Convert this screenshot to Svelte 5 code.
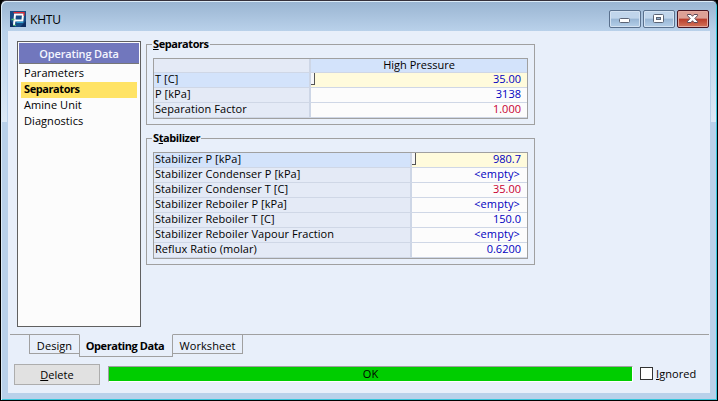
<script>
  const pages = ['Parameters', 'Separators', 'Amine Unit', 'Diagnostics'];
  const separators = [
    { name: 'T [C]', value: '35.00' },
    { name: 'P [kPa]', value: '3138' },
    { name: 'Separation Factor', value: '1.000', red: true }
  ];
  const stabilizer = [
    { name: 'Stabilizer P [kPa]', value: '980.7' },
    { name: 'Stabilizer Condenser P [kPa]', value: '<empty>' },
    { name: 'Stabilizer Condenser T [C]', value: '35.00', red: true },
    { name: 'Stabilizer Reboiler P [kPa]', value: '<empty>' },
    { name: 'Stabilizer Reboiler T [C]', value: '150.0' },
    { name: 'Stabilizer Reboiler Vapour Fraction', value: '<empty>' },
    { name: 'Reflux Ratio (molar)', value: '0.6200' }
  ];
</script>

{#snippet rows(items)}
  {#each items as row, i}
    <div class="row" class:current={i === 0}>
      <div class="name">{row.name}</div>
      <div class="value" class:red={row.red} class:empty={row.value === '<empty>'}>
        {#if i === 0}<i class="grip"></i>{/if}<span>{row.value}</span>
      </div>
    </div>
  {/each}
{/snippet}

<div class="window">
  <header>
    <svg class="logo" width="16" height="16" viewBox="0 0 16 16">
      <rect width="16" height="16" fill="#174c85" />
      <path d="M0 16V9l5 7zM10 16l6-6v6z" fill="#0d2d61" />
      <path d="M4 14L5 3.5h8L12.4 9.5H5" fill="none" stroke="#fff" stroke-width="2" />
      <path d="M1.5 8.5h3" stroke="#59c878" stroke-width="1.5" />
      <path d="M3.5 1.7h10.5v3" fill="none" stroke="#e02b35" stroke-width="1.3" />
      <path d="M6.5 11.3h6.8" stroke="#35b5e2" stroke-width="1" />
      <path d="M3 14.3h3" stroke="#59c878" stroke-width="1" />
    </svg>
    <span class="title">KHTU</span>
    <div class="controls">
      <div class="ctl"><svg width="30" height="16"><rect x="9.5" y="7.5" width="10" height="4" rx="1" fill="#fff" stroke="#5b6475" /></svg></div>
      <div class="ctl"><svg width="30" height="16"><rect x="9.5" y="3.5" width="10" height="8" rx="1" fill="#fff" stroke="#5b6475" /><rect x="12.5" y="6.5" width="4" height="2" fill="#8facc9" stroke="#5b6475" /></svg></div>
      <div class="ctl close"><svg width="30" height="16"><path d="M9.5 3.5h3.5l1.5 1.8 1.5-1.8h3.5v1.2l-2.7 2.8 2.7 2.8v1.2H16l-1.5-1.8-1.5 1.8H9.5v-1.2l2.7-2.8-2.7-2.8z" fill="#fff" stroke="#5b4857" /></svg></div>
    </div>
  </header>

  <main>
    <div class="body">
      <nav>
        <div class="heading"><span>Operating Data</span></div>
        {#each pages as page}
          <div class="page" class:selected={page === 'Separators'}><span>{page}</span></div>
        {/each}
      </nav>
      <div class="groups">
        <section class="first">
          <h2><u>S</u>eparators</h2>
          <div class="table">
            <div class="row head"><div class="name"></div><div class="colhead"><span>High Pressure</span></div></div>
            {@render rows(separators)}
          </div>
        </section>
        <section class="second">
          <h2>S<u>t</u>abilizer</h2>
          <div class="table">{@render rows(stabilizer)}</div>
        </section>
      </div>
    </div>

    <div class="tabs">
      <div class="lead"></div>
      <div class="tab design"><span>Design</span></div>
      <div class="tab active"><span>Operating Data</span></div>
      <div class="tab worksheet"><span>Worksheet</span></div>
      <div class="rest"></div>
    </div>

    <footer>
      <div class="delete"><span><u>D</u>elete</span></div>
      <div class="status"><span>OK</span></div>
      <div class="check"></div>
      <div class="ignored"><u>I</u>gnored</div>
    </footer>
  </main>
</div>

<style>
  :global(body) { background: #000; overflow: hidden; }
  * { box-sizing: border-box; }
  .window {
    width: 718px; height: 401px; padding: 0 6px 6px;
    border: 1px solid #000; border-top-color: #35303a; border-radius: 6px 6px 0 0;
    background:
      linear-gradient(#b9d1ea, #dce9f6) 1px 30px / 5px 91px no-repeat,
      linear-gradient(#b9d1ea, #dce9f6) 710px 30px / 5px 91px no-repeat,
      linear-gradient(#99b4d1, #b9d1ea 30px);
    box-shadow: inset 1px 1px #dcebf7, inset -1px -1px #38c6dc;
    font: 11px/15px "Open Sans", "Noto Sans", sans-serif; letter-spacing: 0.06px; color: #000;
    white-space: nowrap;
  }
  header { height: 30px; display: flex; align-items: flex-start; padding: 0 2px 0 3px; }
  .logo { margin-top: 10px; }
  .title { margin: 11px 0 0 4px; font-size: 12px; letter-spacing: -0.2px; }
  .controls { margin: 9px 0 0 auto; display: flex; gap: 2px; }
  .ctl {
    width: 32px; height: 18px; border: 1px solid #59708d; border-radius: 2px;
    background: linear-gradient(#c0d5eb 0 45%, #98b6d5 50%, #b5cfe8);
    box-shadow: inset 0 0 0 1px #d3e2f2;
  }
  .ctl svg { display: block; }
  .close { border-color: #481522; background: linear-gradient(#dda096 0 45%, #b93c2b 50%, #d3745a); box-shadow: inset 0 0 0 1px #e5aaa0; }
  main { height: 362px; width: 702px; margin-left: 1px; background: #e8effa; display: flex; flex-direction: column; }
  .body { height: 303px; display: flex; padding: 10px 0 0 9px; }
  nav { width: 124px; height: 286px; border: 1px solid #606060; background: #fcfcfc; padding: 1px; }
  .heading { height: 21px; margin-bottom: 2px; background: #7177bd; border-bottom: 1px solid #777; color: #f4f5ff; font-weight: 600; text-align: center; line-height: 21px; letter-spacing: -0.15px; }
  .page { height: 16px; margin: 0 2px; padding-left: 3px; line-height: 14px; }
  .selected { background: #ffe365; font-weight: 700; letter-spacing: -0.42px; }
  .groups { margin-left: 5px; width: 389px; padding-top: 3px; }
  section { border: 1px solid #a0a0a0; padding: 0 6px; }
  .first { height: 81px; }
  .second { height: 127px; margin-top: 13px; }
  h2 { font: inherit; font-weight: 700; letter-spacing: -0.42px; line-height: 13px; width: max-content; height: 15px; margin: -8px 0 6px -1px; padding: 0 1px; background: #e8effa; }
  .table { border: 1px solid #a0a0a0; background: #fcfcfc; width: 375px; }
  .first .table { height: 61px; --name: 157px; }
  .second .table { height: 107px; --name: 258px; background: linear-gradient(90deg, #e4eaf6 258px, #fcfcfc 0); }
  .row { height: 15px; display: flex; border-bottom: 1px solid #cfd7e6; line-height: 12px; }
  .head { height: 14px; line-height: 11px; }
  .name { width: var(--name); background: #e4eaf6; border-right: 2px solid #cdd6e6; padding-left: 1px; }
  .colhead { flex: 1; background: #d3e3fb; text-align: center; letter-spacing: 0; }
  .value { flex: 1; display: flex; justify-content: flex-end; padding-right: 6px; color: #0000c0; background: #fcfcfc; letter-spacing: 0; }
  .red { color: #c80032; }
  .empty { padding-right: 7px; letter-spacing: 0.1px; }
  .current .name { background: #d3e3fb; }
  .current .value { background: #fffbdc; }
  .grip { width: 4px; height: 12px; margin-right: auto; background: #f6f7fa; border-right: 1px solid #555; border-bottom: 1px solid #555; }
  .tabs { height: 24px; display: flex; align-items: flex-start; }
  .tab { height: 20px; border: 1px solid #a0a0a0; text-align: center; line-height: 22px; }
  .lead, .rest { height: 1px; background: #a0a0a0; }
  .lead { width: 19px; margin-left: 2px; }
  .rest { flex: 1; margin-right: 1px; }
  .design { width: 50px; border-right: 0; }
  .active { width: 94px; height: 23px; padding-right: 2px; border-top-color: #e8effa; font-weight: 700; letter-spacing: -0.43px; }
  .worksheet { width: 70px; border-left: 0; }
  footer { display: flex; align-items: flex-start; margin: 6px 0 0 6px; }
  .delete { width: 86px; height: 21px; background: #e1e1e1; border: 1px solid #adadad; text-align: center; line-height: 20px; }
  .status { width: 525px; height: 16px; margin: 2px 0 0 8px; background: #00cd00; border: 1px solid #a0a0a0; border-right-color: #fff; border-bottom-color: #fff; text-align: center; line-height: 14px; }
  .check { width: 13px; height: 13px; margin: 3px 0 0 7px; border: 1px solid #333; background: #fff; }
  .ignored { margin: 2px 0 0 3px; }
</style>
